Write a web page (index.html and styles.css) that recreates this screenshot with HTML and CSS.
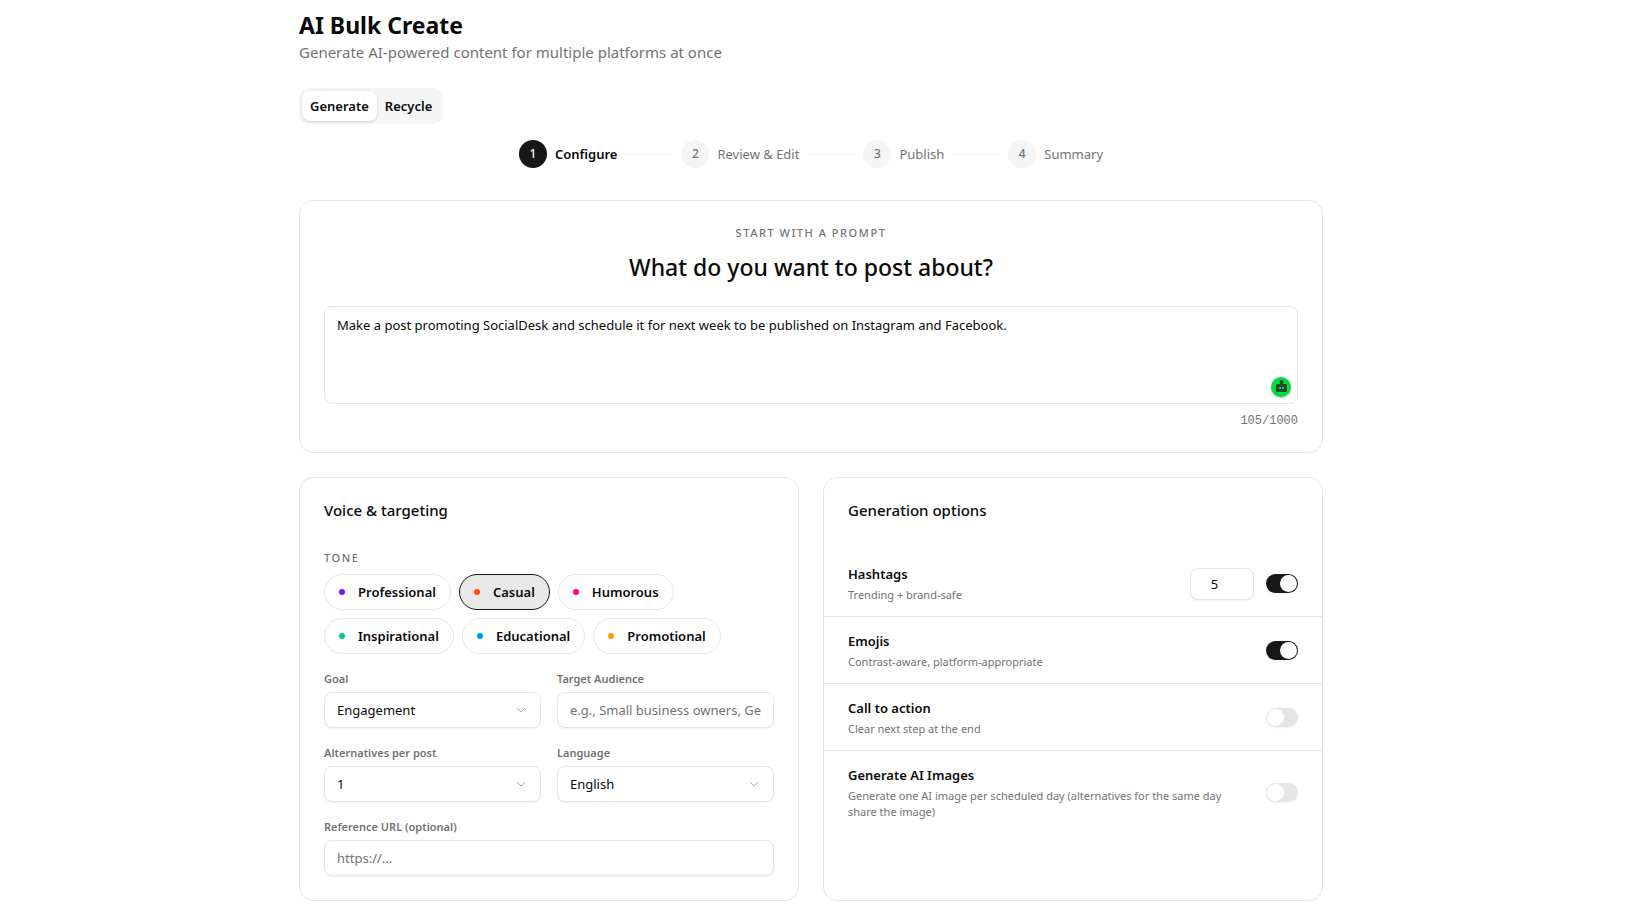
FILE: index.html
```html
<!DOCTYPE html>
<html lang="en">

<head>
    <meta charset="UTF-8">
    <meta name="viewport" content="width=device-width, initial-scale=1.0">
    <title>AI Bulk Create</title>
    <link rel="stylesheet" href="styles.css">
</head>

<body>
    <main class="container">
        <header class="page-header">
            <h1>AI Bulk Create</h1>
            <p>Generate AI-powered content for multiple platforms at once</p>
        </header>

        <div class="tabs" role="tablist">
            <button type="button" class="tab active" role="tab" aria-selected="true">Generate</button>
            <button type="button" class="tab" role="tab" aria-selected="false">Recycle</button>
        </div>

        <ol class="stepper">
            <li class="step current"><span class="step-number">1</span><span>Configure</span></li>
            <li class="step"><span class="step-number">2</span><span>Review &amp; Edit</span></li>
            <li class="step"><span class="step-number">3</span><span>Publish</span></li>
            <li class="step"><span class="step-number">4</span><span>Summary</span></li>
        </ol>

        <section class="card prompt-card">
            <span class="eyebrow">Start with a prompt</span>
            <label class="prompt-title" for="prompt">What do you want to post about?</label>
            <div class="prompt-box">
                <textarea id="prompt" maxlength="1000" spellcheck="false">Make a post promoting SocialDesk and schedule it for next week to be published on Instagram and Facebook.</textarea>
                <button type="button" class="assistant" aria-label="Assistant">
                    <svg viewBox="0 0 20 20" width="20" height="20">
                        <circle cx="10.5" cy="5" r="2" fill="#24452f" />
                        <rect x="9.5" y="5" width="2" height="3" fill="#24452f" />
                        <rect x="5" y="7" width="11" height="8" rx="1.5" fill="#24452f" />
                        <rect x="8" y="10" width="2" height="2" fill="#00dd40" />
                        <rect x="11" y="10" width="2" height="2" fill="#00dd40" />
                    </svg>
                </button>
            </div>
            <div class="counter">105/1000</div>
        </section>

        <div class="columns">
            <section class="card">
                <h2>Voice &amp; targeting</h2>
                <span class="eyebrow" id="tone-label">Tone</span>
                <div class="tones" role="group" aria-labelledby="tone-label">
                    <button type="button" class="tone violet">Professional</button>
                    <button type="button" class="tone orange selected">Casual</button>
                    <button type="button" class="tone pink">Humorous</button>
                    <button type="button" class="tone green">Inspirational</button>
                    <button type="button" class="tone blue">Educational</button>
                    <button type="button" class="tone amber">Promotional</button>
                </div>

                <div class="fields">
                    <div class="field">
                        <label for="goal">Goal</label>
                        <div class="select">
                            <select id="goal">
                                <option>Engagement</option>
                            </select>
                            <svg viewBox="0 0 16 16" width="16" height="16"><path d="M4 6l4 4 4-4" /></svg>
                        </div>
                    </div>
                    <div class="field">
                        <label for="audience">Target Audience</label>
                        <input type="text" id="audience" placeholder="e.g., Small business owners, Gen Z">
                    </div>
                    <div class="field">
                        <label for="alternatives">Alternatives per post</label>
                        <div class="select">
                            <select id="alternatives">
                                <option>1</option>
                            </select>
                            <svg viewBox="0 0 16 16" width="16" height="16"><path d="M4 6l4 4 4-4" /></svg>
                        </div>
                    </div>
                    <div class="field">
                        <label for="language">Language</label>
                        <div class="select">
                            <select id="language">
                                <option>English</option>
                            </select>
                            <svg viewBox="0 0 16 16" width="16" height="16"><path d="M4 6l4 4 4-4" /></svg>
                        </div>
                    </div>
                    <div class="field wide">
                        <label for="url">Reference URL (optional)</label>
                        <input type="url" id="url" placeholder="https://...">
                    </div>
                </div>
            </section>

            <section class="card options-card">
                <h2>Generation options</h2>
                <div class="option">
                    <div class="option-text">
                        <label for="hashtags">Hashtags</label>
                        <p>Trending + brand-safe</p>
                    </div>
                    <input type="number" class="amount" value="5" min="1" aria-label="Number of hashtags">
                    <input type="checkbox" class="switch" id="hashtags" checked>
                </div>
                <div class="option">
                    <div class="option-text">
                        <label for="emojis">Emojis</label>
                        <p>Contrast-aware, platform-appropriate</p>
                    </div>
                    <input type="checkbox" class="switch" id="emojis" checked>
                </div>
                <div class="option">
                    <div class="option-text">
                        <label for="cta">Call to action</label>
                        <p>Clear next step at the end</p>
                    </div>
                    <input type="checkbox" class="switch" id="cta">
                </div>
                <div class="option">
                    <div class="option-text">
                        <label for="images">Generate AI Images</label>
                        <p>Generate one AI image per scheduled day (alternatives for the same day share the image)</p>
                    </div>
                    <input type="checkbox" class="switch" id="images">
                </div>
            </section>
        </div>
    </main>
</body>

</html>
```

FILE: styles.css
```css
* {
    box-sizing: border-box;
    margin: 0;
    padding: 0;
}

body {
    padding: 8px 5px 5px 0;
    background: #fff;
    color: #0a0a0a;
    font: 13px/20px "Noto Sans", "Open Sans", sans-serif;
}

button,
input,
select,
textarea {
    font: inherit;
    color: inherit;
}

button {
    cursor: pointer;
}

.container {
    max-width: 1024px;
    margin: 0 auto;
}

/* header */
.page-header h1 {
    font-size: 23px;
    line-height: 34px;
    font-weight: 700;
}

.page-header p {
    font-size: 15px;
    line-height: 20px;
    color: #737373;
}

.tabs {
    display: inline-flex;
    height: 36px;
    margin-top: 26px;
    padding: 3px;
    border-radius: 10px;
    background: #f5f5f5;
}

.tab {
    padding: 0 8px;
    border: none;
    border-radius: 8px;
    background: none;
    font-weight: 600;
}

.tab.active {
    background: #fff;
    box-shadow: 0 1px 3px rgba(0, 0, 0, 0.15);
}

/* steps */
.stepper {
    display: flex;
    justify-content: center;
    gap: 8px;
    margin: 16px 0 32px;
    list-style: none;
    color: #737373;
}

.step {
    display: flex;
    align-items: center;
    gap: 8px;
}

.step:not(:last-child)::after {
    content: "";
    width: 48px;
    height: 1px;
    background: #f0f0f0;
}

.step-number {
    width: 28px;
    height: 28px;
    border-radius: 50%;
    background: #f5f5f5;
    font-size: 12px;
    line-height: 28px;
    font-weight: 500;
    text-align: center;
}

.step.current {
    color: #0a0a0a;
    font-weight: 600;
}

.step.current .step-number {
    background: #171717;
    color: #fff;
}

/* cards */
.card {
    padding: 24px;
    border: 1px solid #e5e5e5;
    border-radius: 14px;
    background: #fff;
}

.card h2 {
    margin-bottom: 32px;
    font-size: 15px;
    line-height: 16px;
    font-weight: 500;
}

.eyebrow {
    display: block;
    font-size: 11px;
    line-height: 16px;
    font-weight: 500;
    letter-spacing: 0.14em;
    text-transform: uppercase;
    color: #737373;
}

.prompt-card .eyebrow {
    text-align: center;
}

.prompt-title {
    display: block;
    margin: 10px 0 22px;
    font-size: 23px;
    line-height: 33px;
    font-weight: 500;
    text-align: center;
}

.prompt-box {
    position: relative;
}

textarea {
    display: block;
    width: 100%;
    height: 98px;
    padding: 8px 12px;
    border: 1px solid #e5e5e5;
    border-radius: 8px;
    resize: none;
}

.assistant {
    position: absolute;
    right: 7px;
    bottom: 7px;
    width: 20px;
    height: 20px;
    border: none;
    border-radius: 50%;
    background: #00dd40;
    box-shadow: 0 1px 2px rgba(0, 0, 0, 0.3);
}

.assistant svg {
    display: block;
}

.counter {
    margin-top: 10px;
    font: 12px/14px "Liberation Mono", monospace;
    text-align: right;
    color: #737373;
}

.columns {
    display: grid;
    grid-template-columns: 1fr 1fr;
    gap: 24px;
    margin-top: 24px;
}

/* tone pills */
.tones {
    display: flex;
    flex-wrap: wrap;
    gap: 8px;
    margin: 8px 0 16px;
}

.tone {
    display: flex;
    align-items: center;
    gap: 13px;
    height: 36px;
    padding: 0 14px;
    border: 1px solid #e5e5e5;
    border-radius: 18px;
    background: #fff;
    font-weight: 600;
}

.tone::before {
    content: "";
    width: 6px;
    height: 6px;
    border-radius: 50%;
    background: #7f0dff;
}

.tone.orange::before {
    background: #ff4f0a;
}

.tone.pink::before {
    background: #ff0099;
}

.tone.green::before {
    background: #00d07c;
}

.tone.blue::before {
    background: #0094ff;
}

.tone.amber::before {
    background: #ff9b00;
}

.tone.selected {
    border-color: #171717;
    background: #e8e8e8;
}

/* fields */
.fields {
    display: grid;
    grid-template-columns: 1fr 1fr;
    gap: 16px;
}

.field label {
    display: block;
    margin-bottom: 4px;
    font-size: 11px;
    line-height: 18px;
    font-weight: 600;
    color: #737373;
}

.field.wide {
    grid-column: 1 / -1;
}

.field input,
.field select {
    display: block;
    width: 100%;
    height: 36px;
    padding: 0 12px;
    border: 1px solid #e5e5e5;
    border-radius: 8px;
    background: #fff;
    box-shadow: 0 1px 2px rgba(0, 0, 0, 0.05);
    appearance: none;
}

input::placeholder {
    color: #737373;
}

.select {
    position: relative;
}

.select svg {
    position: absolute;
    top: 10px;
    right: 12px;
    fill: none;
    stroke: #a8a8a8;
    pointer-events: none;
}

/* generation options */
.options-card {
    padding: 24px 0;
}

.options-card h2 {
    padding: 0 24px;
}

.option {
    display: flex;
    align-items: center;
    gap: 12px;
    padding: 14px 24px 13px;
}

.option + .option {
    border-top: 1px solid #e5e5e5;
}

.option-text {
    flex: 1;
}

.option-text label {
    display: block;
    margin-bottom: 3px;
    font-weight: 600;
}

.option-text p {
    max-width: 400px;
    font-size: 11px;
    line-height: 16px;
    color: #737373;
}

.amount {
    width: 64px;
    height: 32px;
    padding: 0 12px;
    border: 1px solid #e5e5e5;
    border-radius: 8px;
    box-shadow: 0 1px 2px rgba(0, 0, 0, 0.05);
    text-align: center;
}

.switch {
    display: flex;
    align-items: center;
    width: 32px;
    height: 19px;
    padding: 0 1px;
    border-radius: 10px;
    background: #e5e5e5;
    box-shadow: 0 1px 2px rgba(0, 0, 0, 0.05);
    appearance: none;
    cursor: pointer;
}

.switch::before {
    content: "";
    width: 17px;
    height: 17px;
    border-radius: 50%;
    background: #fff;
}

.switch:checked {
    justify-content: flex-end;
    background: #171717;
}
```
